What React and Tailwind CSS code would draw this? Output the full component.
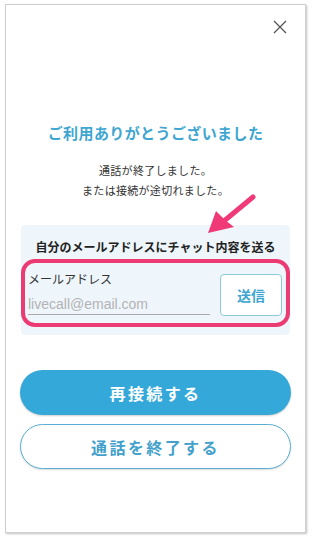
import React, { useState } from "react";

const jp = { fontFamily: '"Noto Sans CJK JP", "Noto Sans", sans-serif' };

export default function App() {
  const [email, setEmail] = useState("");

  return (
    <div className="relative w-[312px] h-[540px] bg-white" style={jp}>
      <div className="ml-[5px] mt-[4px] w-[301px] h-[529px] border border-[#cfcfcf] shadow-[1px_1px_2px_rgba(0,0,0,0.25)] bg-white flex flex-col">
        <div className="flex justify-end pr-[18px] mt-[15px]">
          <svg width="14" height="14" viewBox="0 0 14 14" className="block">
            <path d="M1 1 L13 13 M13 1 L1 13" stroke="#555" strokeWidth="1.3" fill="none" />
          </svg>
        </div>

        <h1 className="mt-[89px] text-center text-[15px] leading-[20px] font-bold tracking-[0.4px] text-[#3ea6d0]">
          ご利用ありがとうございました
        </h1>

        <p className="mt-[17px] text-center text-[11px] leading-[20px] tracking-[0.3px] text-[#333]">
          通話が終了しました。
          <br />
          または接続が途切れました。
        </p>

        <div className="mt-[25px] mx-[15px] rounded-[4px] bg-[#eef6fc] pt-[14px] pb-[8px]">
          <p className="text-center text-[12px] leading-[16px] font-bold text-[#222]">
            自分のメールアドレスにチャット内容を送る
          </p>
          <div className="mt-[4px] rounded-[14px] border-[4px] border-[#ec3a72] pl-[3px] pr-[4px] pt-[8px] pb-[7px] flex justify-between">
            <div className="flex flex-col">
              <label className="text-[12px] leading-[16px] text-[#333]">メールアドレス</label>
              <input
                type="email"
                value={email}
                onChange={(e) => setEmail(e.target.value)}
                placeholder="livecall@email.com"
                className="mt-[6px] w-[182px] h-[22px] bg-transparent border-b border-[#a9a9a9] text-[14px] text-[#333] placeholder:text-[#b3b3b3] outline-none"
                style={{ fontFamily: '"Liberation Sans", Arial, sans-serif' }}
              />
            </div>
            <button className="mt-[3px] w-[62px] h-[42px] rounded-[4px] border border-[#8ccad8] bg-white text-[14px] font-bold text-[#3ea6d0]">
              送信
            </button>
          </div>
        </div>

        <button className="mt-[35px] mx-[14px] h-[45px] rounded-full bg-[#35a8da] text-white text-[16px] font-bold tracking-[2.4px] shadow-[0_1px_2px_rgba(0,0,0,0.2)]">
          再接続する
        </button>
        <button className="mt-[9px] mx-[14px] h-[45px] rounded-full bg-white border border-[#5aaed2] text-[#43a1cb] text-[16px] font-bold tracking-[2.4px] shadow-[0_1px_2px_rgba(0,0,0,0.15)]">
          通話を終了する
        </button>
      </div>

      <svg
        className="absolute left-[200px] top-[186px]"
        width="64"
        height="50"
        viewBox="0 0 64 50"
      >
        <line x1="24" y1="31" x2="53" y2="7" stroke="#f03a78" strokeWidth="5" strokeLinecap="round" />
        <path d="M8 43 L16 21 L25 30 L34 37 Z" fill="#f03a78" />
      </svg>
    </div>
  );
}
